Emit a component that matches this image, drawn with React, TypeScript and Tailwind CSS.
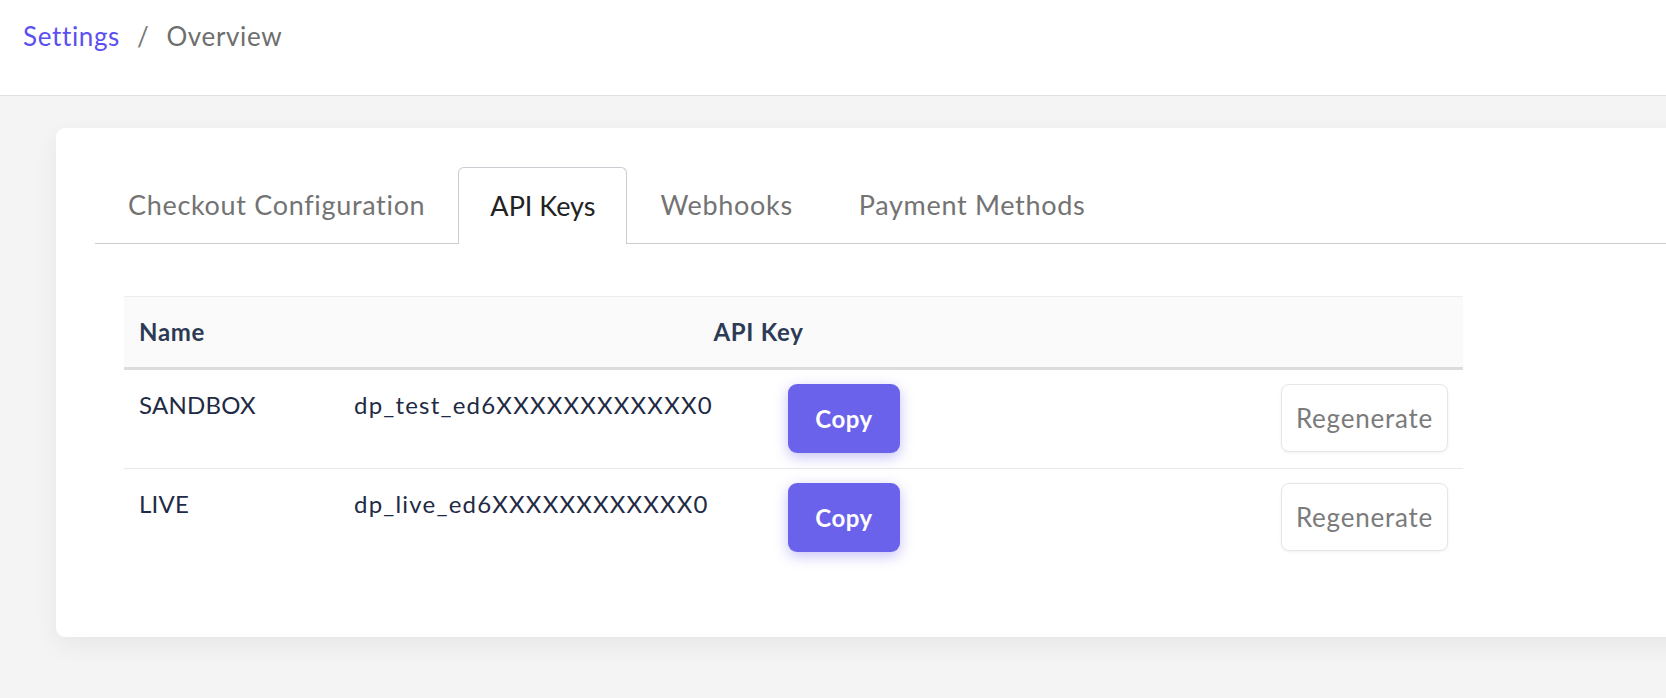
import React from "react";

const keys = [
  { name: "SANDBOX", key: "dp_test_ed6XXXXXXXXXXXX0" },
  { name: "LIVE", key: "dp_live_ed6XXXXXXXXXXXX0" },
];

const tabs = ["Checkout Configuration", "API Keys", "Webhooks", "Payment Methods"];

const App = () => {
  return (
    <div className="h-[698px] w-[1666px] overflow-hidden bg-[#f4f4f4] font-['Lato',sans-serif]">
      <header className="h-[96px] border-b border-[#e1e1e4] bg-white pl-[23px] pt-[17px]">
        <nav className="flex items-center text-[26px] leading-[38px] tracking-[0.025em]">
          <span className="text-[#5b4ff0]">Settings</span>
          <span className="px-[17px] text-[#777]">/</span>
          <span className="text-[#6e6e6e]">Overview</span>
        </nav>
      </header>

      <main className="pl-[56px] pt-[32px]">
        <div className="w-[1700px] rounded-[9px] bg-white pb-[70px] pl-[39px] pt-[39px] shadow-[0_8px_24px_rgba(0,0,0,0.06)]">
          <div className="flex border-b border-[#c9ccd1] text-[27px] tracking-[0.025em]">
            {tabs.map((t) => (
              <div
                key={t}
                className={
                  t === "API Keys"
                    ? "-mb-px flex h-[77px] items-center rounded-t-[6px] border border-b-0 border-[#c9ccd1] bg-white px-[31px] tracking-normal text-[#222]"
                    : "flex h-[76px] items-center px-[33px] text-[#737373]"
                }
              >
                {t}
              </div>
            ))}
          </div>

          <div className="ml-[29px] mt-[52px] w-[1339px]">
            <div className="grid grid-cols-[215px_836px_288px] border-t border-[#ededed] border-b-[3px] border-b-[#dcdcde] bg-[#fafafa] text-[24px] font-bold tracking-[0.03em] text-[#2d3a55]">
              <div className="pl-[15px] leading-[70px]">Name</div>
              <div className="col-span-2 pr-[285px] text-center leading-[70px]">API Key</div>
            </div>
            {keys.map((k, i) => (
              <div
                key={k.name}
                className={
                  "grid grid-cols-[215px_434px_402px_288px] items-start pb-[15px] pt-[14px] text-[24px] text-[#1f2a44]" +
                  (i === 0 ? " border-b border-[#e8e8e8]" : "")
                }
              >
                <div className="pl-[15px] leading-[41px] tracking-[0.01em]">{k.name}</div>
                <div className="pl-[15px] leading-[41px] tracking-[0.05em]">{k.key}</div>
                <div className="pl-[15px]">
                  <button className="h-[69px] w-[112px] rounded-[9px] bg-[#6b62ec] text-[24px] font-bold tracking-[0.02em] text-white shadow-[0_4px_14px_rgba(107,98,236,0.4)]">
                    Copy
                  </button>
                </div>
                <div className="flex justify-end pr-[15px]">
                  <button className="h-[68px] w-[167px] rounded-[8px] border border-[#e6e6e6] bg-white text-[26px] tracking-[0.03em] text-[#7b7b7b] shadow-[0_1px_3px_rgba(0,0,0,0.06)]">
                    Regenerate
                  </button>
                </div>
              </div>
            ))}
          </div>
        </div>
      </main>
    </div>
  );
};

export default App;
